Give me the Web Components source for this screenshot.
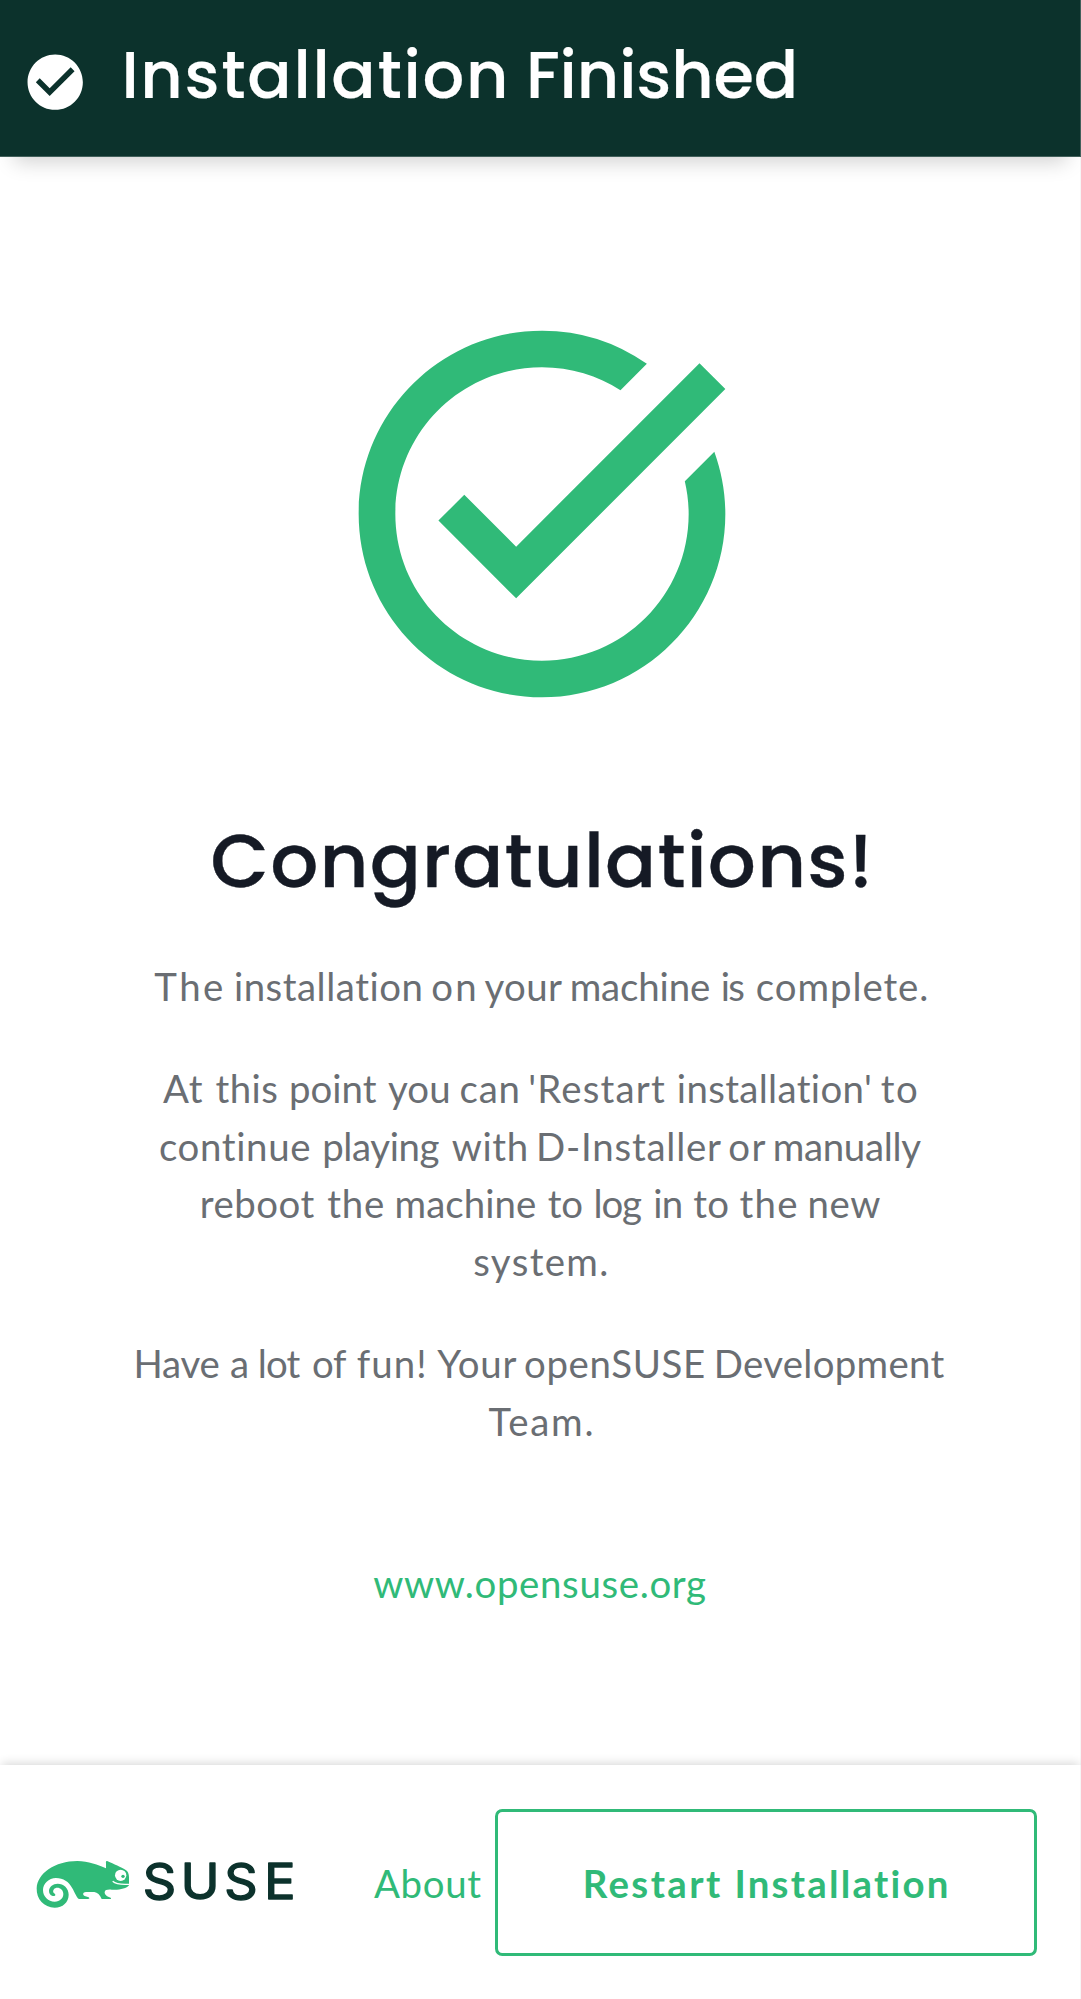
<!DOCTYPE html>
<html lang="en">
<head>
<meta charset="utf-8">
<title>Installation Finished</title>
<style>
html,body{margin:0;background:#fff}
body{font-family:Lato,"Noto Sans",sans-serif;font-size:38.4px;line-height:57.6px;color:#6a6e73}
</style>
</head>
<body>
<install-page></install-page>
<script>
const define=(name,html,ready)=>customElements.define(name,class extends HTMLElement{
  connectedCallback(){
    if(this.shadowRoot)return;
    this.attachShadow({mode:'open'}).innerHTML=html;
    if(ready)ready(this);
  }
});

// One line of text with tracking tuned word by word: `ink` lists the
// horizontal extent (start-end) of each word.
const pen=document.createElement('canvas').getContext('2d');
define('text-line',`<style>
:host{display:block;white-space:pre}
</style><div></div>`,el=>{
  const line=el.shadowRoot.querySelector('div');
  const cs=getComputedStyle(el);
  pen.font=`${cs.fontWeight} ${cs.fontSize} ${cs.fontFamily}`;
  const words=el.textContent.trim().split(/\s+/);
  const ink=el.getAttribute('ink').split(' ').map(s=>s.split('-').map(Number));
  const origin=el.getBoundingClientRect().left;
  let x=origin,gap=null;
  words.forEach((word,i)=>{
    const m=pen.measureText(word),[a,b]=ink[i];
    const inkWidth=m.actualBoundingBoxRight+m.actualBoundingBoxLeft;
    const start=a+m.actualBoundingBoxLeft;
    const ls=word.length>1?(b-a-inkWidth)/(word.length-1):0;
    if(gap)gap.style.letterSpacing=(start-x-gap.getBoundingClientRect().width)+'px';
    else line.style.paddingLeft=(start-origin)+'px';
    const span=document.createElement('span');
    span.textContent=word;
    span.style.letterSpacing=ls+'px';
    line.append(span);
    x=start+span.getBoundingClientRect().width;
    if(i<words.length-1){
      gap=document.createElement('span');
      gap.textContent=' ';
      line.append(gap);
    }
  });
});

define('check-badge',`<style>:host{display:block;width:66.4px;height:66.4px}svg{display:block}</style>
<svg width="66.4" height="66.4" viewBox="0 0 24 24" fill="#fff"><path d="M12 2C6.48 2 2 6.48 2 12s4.48 10 10 10 10-4.48 10-10S17.52 2 12 2zm-2 15l-5-5 1.41-1.41L10 14.17l7.59-7.59L19 8l-9 9z"/></svg>`);

define('success-icon',`<style>:host{display:block;width:440px;height:440px;margin:0 auto}svg{display:block;margin-left:1.7px}</style>
<svg width="440" height="440" viewBox="0 0 24 24" fill="#30ba78"><path d="M22 5.18L10.59 16.6l-4.24-4.24 1.41-1.41 2.83 2.83 10-10L22 5.18zm-2.21 5.04c.13.57.21 1.17.21 1.78 0 4.42-3.58 8-8 8s-8-3.58-8-8 3.58-8 8-8c1.58 0 3.04.46 4.28 1.25l1.44-1.44A9.9 9.9 0 0012 2C6.48 2 2 6.48 2 12s4.48 10 10 10 10-4.48 10-10c0-1.19-.22-2.33-.6-3.39l-1.61 1.61z"/></svg>`);

define('page-header',`<style>
:host{display:flex;box-sizing:border-box;width:1081px;height:157px;background:#0c322c;color:#fff;
 border:solid #42605b;border-width:0 1px 1px 0;
 box-shadow:0 19.2px 19.2px -14.4px rgba(3,3,3,.18);padding-left:21.9px}
check-badge{margin-top:49.1px}
h1{margin:35.4px 0 0 33px;font:500 65.5px/80px Poppins,Inter,sans-serif;font-feature-settings:"cv11","ss07";-webkit-text-stroke:.2px #fff}
</style><check-badge></check-badge><h1><slot></slot></h1>`);

define('page-main',`<style>
:host{display:flex;flex-direction:column;width:1081px;height:1608px;box-sizing:border-box;padding-top:137.3px;border-right:1px solid #f6f6f6}
h2{margin:82px 0 0;font:500 75.5px/90px Poppins,Inter,sans-serif;font-feature-settings:"cv11","ss07";color:#151a25;-webkit-text-stroke:.4px #151a25}
section{display:flex;flex-direction:column;gap:44.7px;margin-top:51.6px}
a{display:block;margin-top:104.4px;color:#30ba78}
p{margin:0}
</style>
<success-icon></success-icon>
<h2><text-line ink="212.6-866.8">Congratulations!</text-line></h2>
<section>
<p><text-line ink="154.3-222.1 235.9-421.1 432.3-474.2 484.4-561.9 571.6-708.9 722.7-744.1 756.8-926.2">The installation on your machine is complete.</text-line></p>
<p><text-line ink="163-202.8 215.5-277.2 291-376.7 388-448.2 460.4-517.6 530.3-665 678.8-870.6 880.8-917">At this point you can 'Restart installation' to</text-line>
<text-line ink="159.9-309.9 324.2-439.5 451.7-525.7 539-721.1 729.3-765.5 774.7-921.1">continue playing with D-Installer or manually</text-line>
<text-line ink="201.7-314.5 327.2-382.9 396.6-534.9 547.7-582.3 595.6-642 655.3-680.8 693.1-728.3 739.5-796.1 809.4-880.3">reboot the machine to log in to the new</text-line>
<text-line ink="474.2-606.3">system.</text-line></p>
<p><text-line ink="136.6-218.6 230.9-247.5 259.8-300.5 312.9-347.1 356.8-424.3 437.1-516.4 525-703.9 716.8-944.4">Have a lot of fun! Your openSUSE Development</text-line>
<text-line ink="488.6-591.4">Team.</text-line></p>
</section>
<a><text-line ink="373.2-706">www.opensuse.org</text-line></a>`);

define('suse-logo',`<style>:host{display:block;width:260px;height:50px;flex:none}svg{display:block;overflow:visible}
text{font:400 49.5px Inter,sans-serif;fill:#0c322c;stroke:#0c322c;stroke-width:1.5px;stroke-linejoin:round}</style>
<svg width="260" height="50" viewBox="36 1860 260 50">
<g transform="translate(0 1740) scale(.33333)">
<path fill="#30ba78" d="M110 445C112 400 165 363 232 363C265 363 295 375 318 385L318 370C317 364 319 362 323 364C340 371 365 383 376 389C384 393 387 402 387 412L387 436C380 446 355 451 335 449C322 448 315 450 314 456C313 464 322 470 332 473C335 477 332 477 328 477L305 477C300 465 292 457 283 456L258 456C248 457 247 464 254 468L266 472C270 475 268 477 264 477L237 477C230 473 225 458 216 443C207 426 190 414 168 414C146 414 129 431 129 450C129 470 145 485 164 485C180 485 190 474 190 462C190 450 181 443 172 443C163 443 158 450 160 457C161 461 165 460 166 464C166 468 162 469 158 468C150 465 147 459 147 452C148 440 159 431 173 431C191 431 206 445 206 464C206 487 188 503 164 503C132 503 109 478 110 445Z"/>
<circle cx="362" cy="406" r="17" fill="#fff"/><circle cx="369" cy="409" r="5" fill="#30ba78"/>
<path d="M338 424C350 435 370 434 387 433" fill="none" stroke="#fff" stroke-width="4"/></g>
<text transform="scale(1.05 1)" x="135.9 172.2 213.7 251.6" y="1898.8">SUSE</text>
</svg>`);

define('outline-button',`<style>
:host{display:block;box-sizing:border-box;width:542px;height:146.4px;border:3px solid #30ba78;border-radius:7.2px;
 padding-top:42.7px;color:#30ba78;font-weight:700}
</style><text-line ink="585.7-720.9 737.4-947.4">Restart Installation</text-line>`);

define('page-footer',`<style>
:host{display:flex;box-sizing:border-box;width:1081px;height:234px;background:#fff;padding:44.4px 43px 0 36px;border-right:1px solid #f6f6f6;
 box-shadow:0 -4.8px 9.6px -2.4px rgba(3,3,3,.16)}
suse-logo{margin-top:50.6px}
a{color:#30ba78;margin:45.7px 0 0 78px;width:107px}
outline-button{margin-left:14px}
</style><suse-logo></suse-logo><a><text-line ink="374-481.2">About</text-line></a><outline-button></outline-button>`);

define('install-page',`<style>:host{display:block;width:1081px;height:1999px;overflow:hidden}page-header{position:relative}</style>
<page-header><text-line ink="125.4-504 530-793.8">Installation Finished</text-line></page-header>
<page-main></page-main>
<page-footer></page-footer>`);
</script>
</body>
</html>
